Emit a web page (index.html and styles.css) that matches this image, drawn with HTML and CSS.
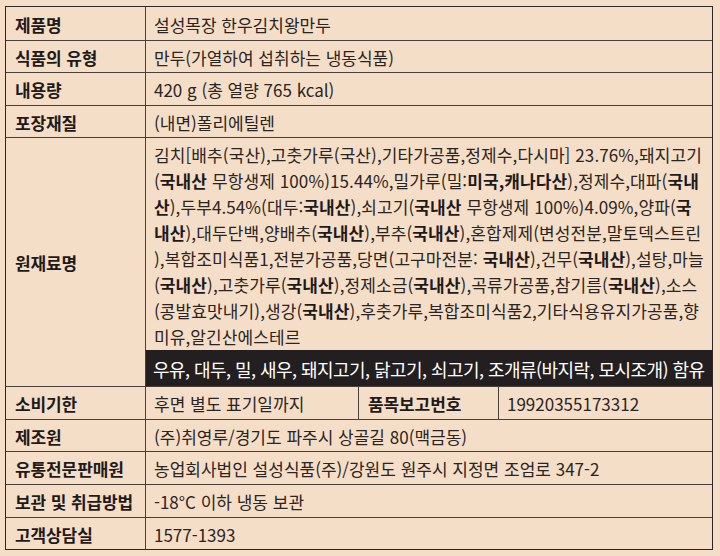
FILE: index.html
```html
<!DOCTYPE html>
<html lang="ko">
<head>
<meta charset="utf-8">
<title>제품 정보</title>
<link rel="stylesheet" href="styles.css">
</head>
<body>
<div class="info">
  <div class="label r1">제품명</div>
  <div class="value span3 r1">설성목장 한우김치왕만두</div>

  <div class="label r2">식품의 유형</div>
  <div class="value span3 r2">만두(가열하여 섭취하는 냉동식품)</div>

  <div class="label r3">내용량</div>
  <div class="value span3 r3">420 g (총 열량 765 kcal)</div>

  <div class="label r4">포장재질</div>
  <div class="value span3 r4">(내면)폴리에틸렌</div>

  <div class="label ingr-label">원재료명</div>
  <div class="ingr span3">
    <div class="ingr-text">
      <span class="line">김치[배추(국산),고춧가루(국산),기타가공품,정제수,다시마] 23.76%,돼지고기</span>
      <span class="line">(<b>국내산</b> 무항생제 100%)15.44%,밀가루(밀:<b>미국,캐나다산</b>),정제수,대파(<b>국내</b></span>
      <span class="line"><b>산</b>),두부4.54%(대두:<b>국내산</b>),쇠고기(<b>국내산</b> 무항생제 100%)4.09%,양파(<b>국</b></span>
      <span class="line"><b>내산</b>),대두단백,양배추(<b>국내산</b>),부추(<b>국내산</b>),혼합제제(변성전분,말토덱스트린</span>
      <span class="line">),복합조미식품1,전분가공품,당면(고구마전분: <b>국내산</b>),건무(<b>국내산</b>),설탕,마늘</span>
      <span class="line">(<b>국내산</b>),고춧가루(<b>국내산</b>),정제소금(<b>국내산</b>),곡류가공품,참기름(<b>국내산</b>),소스</span>
      <span class="line">(콩발효맛내기),생강(<b>국내산</b>),후춧가루,복합조미식품2,기타식용유지가공품,향</span>
      <span class="line">미유,알긴산에스테르</span>
    </div>
    <div class="allergy">우유, 대두, 밀, 새우, 돼지고기, 닭고기, 쇠고기, 조개류(바지락, 모시조개) 함유</div>
  </div>

  <div class="label r6">소비기한</div>
  <div class="value r6">후면 별도 표기일까지</div>
  <div class="label r6">품목보고번호</div>
  <div class="value r6">19920355173312</div>

  <div class="label r7">제조원</div>
  <div class="value span3 r7">(주)취영루/경기도 파주시 상골길 80(맥금동)</div>

  <div class="label r8">유통전문판매원</div>
  <div class="value span3 r8">농업회사법인 설성식품(주)/강원도 원주시 지정면 조엄로 347-2</div>

  <div class="label r9">보관 및 취급방법</div>
  <div class="value span3 r9">-18°C 이하 냉동 보관</div>

  <div class="label r10">고객상담실</div>
  <div class="value span3 r10">1577-1393</div>
</div>
</body>
</html>
```

FILE: styles.css
```css
html, body {
  margin: 0;
  padding: 0;
  background: #f5dec8;
}
body {
  padding: 6px 7px 0 5px;
  font-family: "Noto Sans CJK KR", "Noto Sans", sans-serif;
  color: #2a2422;
}
.info {
  display: grid;
  grid-template-columns: 139px 212px 139px 1fr;
  grid-template-rows: 33px 31px 32px 31px 248px 32px 31px 32px 32px 31px;
  gap: 1px;
  background: #4a403b;
  border: 1px solid #2e2624;
  width: 708px;
  box-sizing: border-box;
}
.label, .value, .ingr {
  background: #f5dec8;
}
.label {
  display: flex;
  align-items: center;
  padding: 1px 0 0 9px;
  font-size: 17px;
  font-weight: 700;
  color: #1f1a1a;
  letter-spacing: -0.1px;
  white-space: nowrap;
}
.value {
  display: flex;
  align-items: center;
  padding: 1px 0 0 8px;
  font-size: 17px;
  color: #2a2422;
  white-space: nowrap;
}
.span3 {
  grid-column: 2 / 5;
}
.ingr {
  display: flex;
  flex-direction: column;
}
.ingr-text {
  padding: 4px 0 0 8px;
  height: 212px;
  box-sizing: border-box;
  font-size: 17px;
  line-height: 26px;
  letter-spacing: 0.1px;
  color: #2a2422;
}
.ingr-text .line {
  display: block;
  white-space: nowrap;
}
.ingr-text b {
  font-weight: 700;
  color: #1f1a1a;
}
.allergy {
  flex: 1;
  background: #231f20;
  color: #ffffff;
  display: flex;
  align-items: center;
  padding: 1px 0 0 7px;
  font-size: 18px;
  letter-spacing: -0.55px;
  white-space: nowrap;
}
```
